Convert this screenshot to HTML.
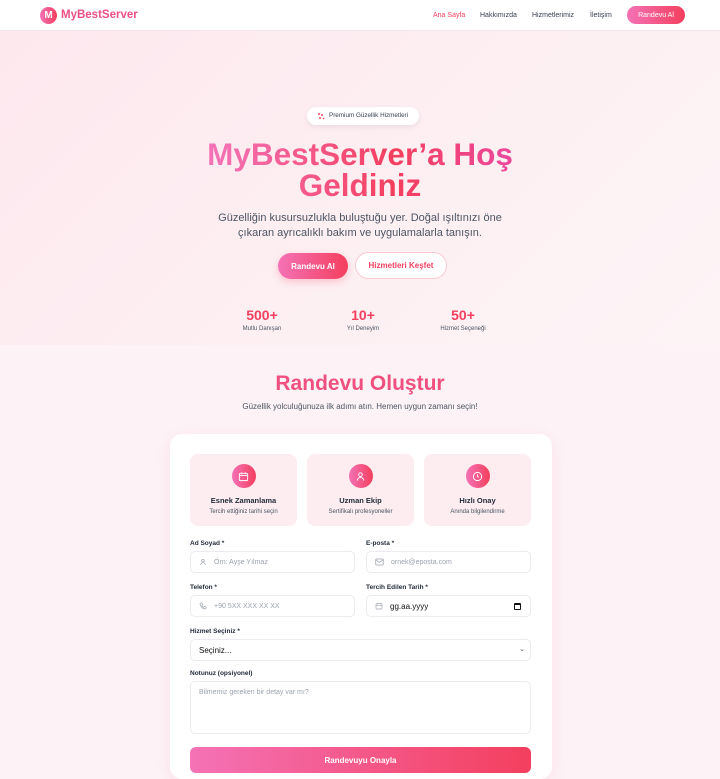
<!DOCTYPE html>
<html><head><meta charset="utf-8"><style>
*{box-sizing:border-box;margin:0;padding:0}
body{width:720px;height:774px;overflow:hidden;font-family:"Liberation Sans",sans-serif;background:#fdf3f6;position:relative;color:#374151}
.abs{position:absolute}
.nav{left:0;top:0;width:720px;height:31px;background:#fff;border-bottom:1px solid #f3e6ea}
.grad{background:linear-gradient(90deg,#f472b6,#f43f5e)}
.hero{left:0;top:31px;width:720px;height:314px;background:linear-gradient(135deg,#fde8ee,#fdf0f3 60%,#fdf4f6)}
.c{text-align:center}
.fx{display:flex;align-items:center;justify-content:center}
.card{left:170px;top:434px;width:382px;height:345px;background:#fff;border-radius:12px;box-shadow:0 4px 18px rgba(240,100,140,.12)}
.feat{top:454px;width:107px;height:72px;background:#fdedf1;border-radius:8px;text-align:center}
.feat .ic{width:24px;height:24px;border-radius:50%;margin:10px auto 0;display:flex;align-items:center;justify-content:center}
.feat b{display:block;font-size:7.5px;color:#1f2937;margin-top:8px}
.feat span{display:block;font-size:6px;color:#4b5563;margin-top:4px}
.lbl{font-size:6.5px;font-weight:bold;color:#1f2937}
.inp{height:22px;border:1px solid #ececf0;border-radius:5px;background:#fff;font-size:7px;color:#9ca3af;display:flex;align-items:center;padding-left:8px}
.inp svg{margin-right:7px}
</style></head><body>
<div class="abs nav">
 <div class="abs grad fx" style="left:40px;top:7px;width:17px;height:17px;border-radius:50%;color:#fff;font-weight:bold;font-size:10px">M</div>
 <div class="abs" style="left:61px;top:9px;font-size:11.5px;line-height:13px;font-weight:bold;color:#ec4f86">MyBestServer</div>
 <div class="abs" style="left:433px;top:11px;font-size:7px;line-height:9px;color:#f43f5e">Ana Sayfa</div>
 <div class="abs" style="left:480px;top:11px;font-size:7px;line-height:9px;color:#374151">Hakkımızda</div>
 <div class="abs" style="left:532px;top:11px;font-size:7px;line-height:9px;color:#374151">Hizmetlerimiz</div>
 <div class="abs" style="left:590px;top:11px;font-size:7px;line-height:9px;color:#374151">İletişim</div>
 <div class="abs grad fx" style="left:627px;top:6px;width:58px;height:18px;border-radius:9px;color:#fff;font-size:7px">Randevu Al</div>
</div>
<div class="abs hero"></div>
<div class="abs" style="left:307px;top:107px;width:112px;height:18px;background:#fff;border-radius:9px;box-shadow:0 2px 6px rgba(0,0,0,.08);font-size:6.3px;color:#374151;line-height:18px;padding-left:22px">Premium Güzellik Hizmetleri
 <svg class="abs" style="left:10px;top:5px" width="8" height="8" viewBox="0 0 8 8"><g fill="#f43f5e"><circle cx="2" cy="2" r="1"/><circle cx="5" cy="3" r="1"/><circle cx="3" cy="6" r="1"/><circle cx="6.5" cy="6.5" r=".8"/></g></svg></div>
<div class="abs c" style="left:0;top:139px;width:720px;font-size:31.5px;font-weight:bold;line-height:31px;background:linear-gradient(90deg,#f472b6 30%,#f43f5e 55%,#ec4899 70%);-webkit-background-clip:text;background-clip:text;color:transparent">MyBestServer’a Hoş<br>Geldiniz</div>
<div class="abs c" style="left:0;top:211px;width:720px;font-size:11px;line-height:14.5px;color:#4b5563">Güzelliğin kusursuzlukla buluştuğu yer. Doğal ışıltınızı öne<br>çıkaran ayrıcalıklı bakım ve uygulamalarla tanışın.</div>
<div class="abs grad fx" style="left:278px;top:253px;width:70px;height:26px;border-radius:13px;color:#fff;font-size:8px;font-weight:bold;box-shadow:0 3px 8px rgba(244,63,94,.25)">Randevu Al</div>
<div class="abs fx" style="left:355px;top:252px;width:92px;height:27px;border-radius:14px;background:#fff;border:1px solid #fbc8d4;color:#f43f5e;font-size:8px;font-weight:bold">Hizmetleri Keşfet</div>
<div class="abs c" style="left:212px;top:307px;width:100px;font-size:14px;font-weight:bold;color:#f43f5e">500+</div>
<div class="abs c" style="left:212px;top:326px;width:100px;font-size:6px;color:#4b5563">Mutlu Danışan</div>
<div class="abs c" style="left:313px;top:307px;width:100px;font-size:14px;font-weight:bold;color:#f43f5e">10+</div>
<div class="abs c" style="left:313px;top:326px;width:100px;font-size:6px;color:#4b5563">Yıl Deneyim</div>
<div class="abs c" style="left:413px;top:307px;width:100px;font-size:14px;font-weight:bold;color:#f43f5e">50+</div>
<div class="abs c" style="left:413px;top:326px;width:100px;font-size:6px;color:#4b5563">Hizmet Seçeneği</div>

<div class="abs c" style="left:0;top:372px;width:720px;font-size:21px;font-weight:bold;color:#f0507f">Randevu Oluştur</div>
<div class="abs c" style="left:0;top:402px;width:720px;font-size:8px;color:#4b5563">Güzellik yolculuğunuza ilk adımı atın. Hemen uygun zamanı seçin!</div>
<div class="abs card"></div>
<div class="abs feat" style="left:190px"><div class="ic grad"><svg width="11" height="11" viewBox="0 0 24 24" fill="none" stroke="#fff" stroke-width="2"><rect x="3" y="5" width="18" height="16" rx="2"/><path d="M3 10h18M8 3v4M16 3v4"/></svg></div><b>Esnek Zamanlama</b><span>Tercih ettiğiniz tarihi seçin</span></div>
<div class="abs feat" style="left:307px"><div class="ic grad"><svg width="11" height="11" viewBox="0 0 24 24" fill="none" stroke="#fff" stroke-width="2"><circle cx="12" cy="8" r="4"/><path d="M5 21c0-4 3-7 7-7s7 3 7 7"/></svg></div><b>Uzman Ekip</b><span>Sertifikalı profesyoneller</span></div>
<div class="abs feat" style="left:424px"><div class="ic grad"><svg width="11" height="11" viewBox="0 0 24 24" fill="none" stroke="#fff" stroke-width="2"><circle cx="12" cy="12" r="9"/><path d="M12 7v5l3 2"/></svg></div><b>Hızlı Onay</b><span>Anında bilgilendirme</span></div>

<div class="abs lbl" style="left:190px;top:540px">Ad Soyad *</div>
<div class="abs lbl" style="left:366px;top:540px">E-posta *</div>
<div class="abs inp" style="left:190px;top:551px;width:165px"><svg width="8" height="8" viewBox="0 0 24 24" fill="none" stroke="#9ca3af" stroke-width="2"><circle cx="12" cy="8" r="4"/><path d="M5 21c0-4 3-7 7-7s7 3 7 7"/></svg>Örn: Ayşe Yılmaz</div>
<div class="abs inp" style="left:366px;top:551px;width:165px"><svg width="9" height="8" viewBox="0 0 24 20" fill="none" stroke="#9ca3af" stroke-width="2"><rect x="2" y="2" width="20" height="16" rx="2"/><path d="M2 4l10 7 10-7"/></svg>ornek@eposta.com</div>
<div class="abs lbl" style="left:190px;top:584px">Telefon *</div>
<div class="abs lbl" style="left:366px;top:584px">Tercih Edilen Tarih *</div>
<div class="abs inp" style="left:190px;top:595px;width:165px"><svg width="8" height="8" viewBox="0 0 24 24" fill="none" stroke="#9ca3af" stroke-width="2"><path d="M5 3h4l2 5-3 2a12 12 0 0 0 6 6l2-3 5 2v4a2 2 0 0 1-2 2A17 17 0 0 1 3 5a2 2 0 0 1 2-2z"/></svg>+90 5XX XXX XX XX</div>
<div class="abs inp" style="left:366px;top:595px;width:165px;color:#111;font-size:8px"><svg width="8" height="8" viewBox="0 0 24 24" fill="none" stroke="#9ca3af" stroke-width="2"><rect x="3" y="5" width="18" height="16" rx="2"/><path d="M3 10h18M8 3v4M16 3v4"/></svg>gg.aa.yyyy<span class="abs" style="right:9px;top:7px;width:7px;height:7px;border:1.3px solid #111;border-top-width:2.5px;border-radius:1px"></span></div>
<div class="abs lbl" style="left:190px;top:628px">Hizmet Seçiniz *</div>
<div class="abs inp" style="left:190px;top:639px;width:341px;color:#111;font-size:8px">Seçiniz...<span class="abs" style="right:5px;top:5px;font-size:7px;color:#555">⌄</span></div>
<div class="abs lbl" style="left:190px;top:670px">Notunuz (opsiyonel)</div>
<div class="abs inp" style="left:190px;top:681px;width:341px;height:53px;align-items:flex-start;padding-top:7px">Bilmemiz gereken bir detay var mı?</div>
<div class="abs fx" style="left:190px;top:747px;width:341px;height:26px;border-radius:6px;background:linear-gradient(90deg,#f472b6,#f43f5e);color:#fff;font-size:8px;font-weight:bold">Randevuyu Onayla</div>
</body></html>
